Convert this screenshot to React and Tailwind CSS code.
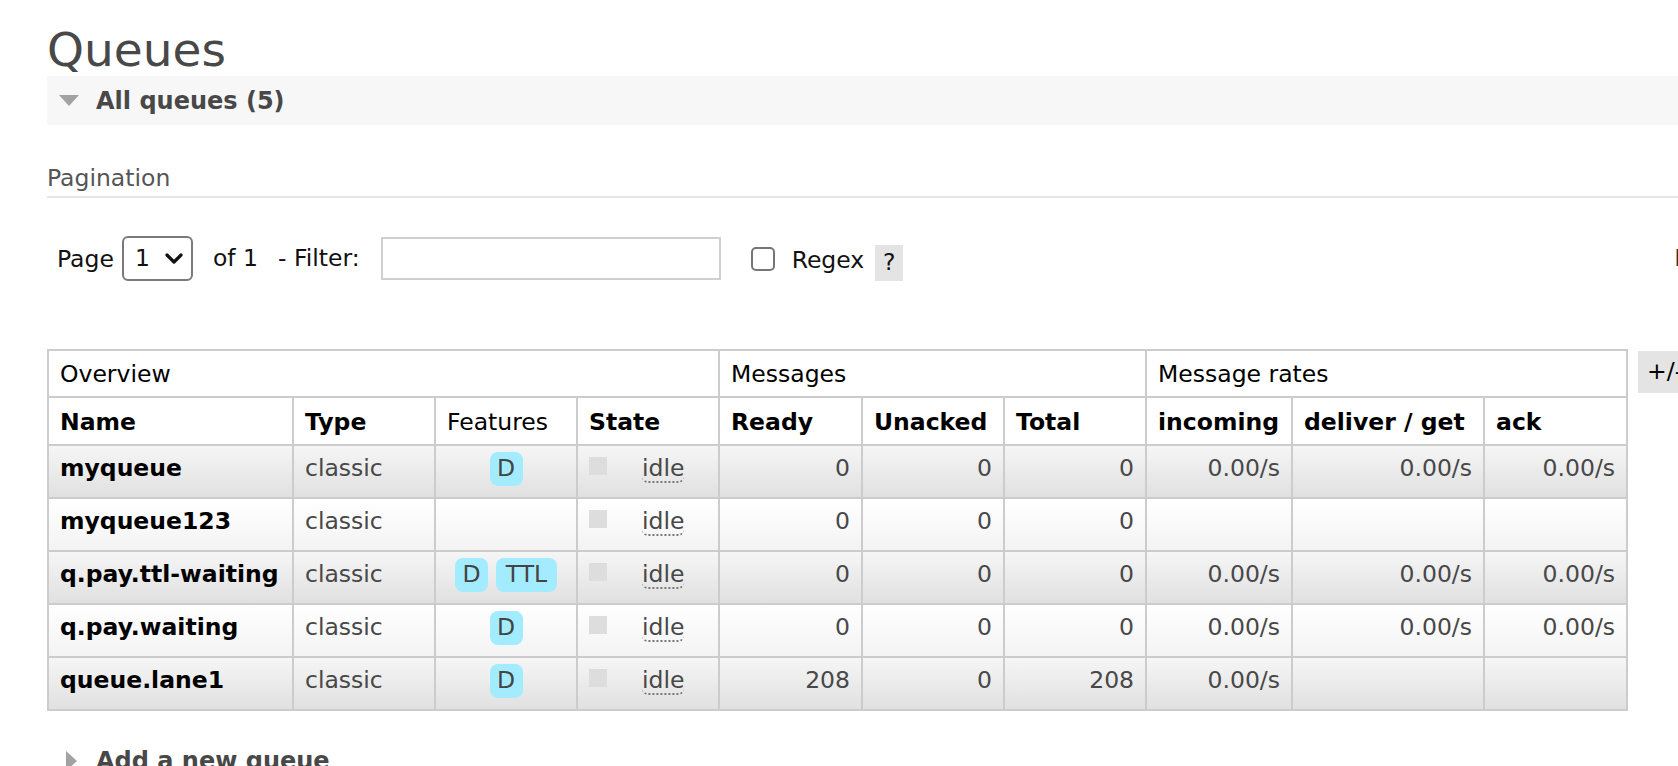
import React from "react";

const rows = [
  { name: "myqueue", feats: ["D"], ready: "0", unacked: "0", total: "0", inc: "0.00/s", del: "0.00/s", ack: "0.00/s" },
  { name: "myqueue123", feats: [], ready: "0", unacked: "0", total: "0", inc: "", del: "", ack: "" },
  { name: "q.pay.ttl-waiting", feats: ["D", "TTL"], ready: "0", unacked: "0", total: "0", inc: "0.00/s", del: "0.00/s", ack: "0.00/s" },
  { name: "q.pay.waiting", feats: ["D"], ready: "0", unacked: "0", total: "0", inc: "0.00/s", del: "0.00/s", ack: "0.00/s" },
  { name: "queue.lane1", feats: ["D"], ready: "208", unacked: "0", total: "208", inc: "0.00/s", del: "", ack: "" },
];

function Badge({ label }) {
  return (
    <span
      className={
        "inline-flex h-[34px] items-center justify-center rounded-[8px] bg-[#a3ecff] text-[#444] " +
        (label === "TTL" ? "w-[61px]" : "w-[33px]")
      }
    >
      {label}
    </span>
  );
}

export default function App() {
  const th = "border-2 border-[#cccccc] px-[11px] align-middle text-left";
  const td = "border-2 border-[#cccccc] px-[11px] pb-[6px] align-middle";
  const num = td + " text-right text-[#484848]";
  return (
    <div className="w-[1678px] h-[766px] overflow-hidden bg-white font-['DejaVu_Sans',Verdana,sans-serif] text-[23.5px] text-black">
      <div className="pl-[47px] w-[1760px]">
        <h1 className="mt-[24px] text-[47px] leading-[52px] font-normal text-[#484848]">Queues</h1>
        <div className="h-[49px] bg-[#f7f7f7] flex items-center">
          <svg className="ml-[12px] shrink-0" width="20" height="11" viewBox="0 0 20 11">
            <polygon points="0,0 20,0 10,11" fill="#a2a2a2" />
          </svg>
          <span className="ml-[17px] text-[24px] font-bold text-[#484848]">All queues (5)</span>
        </div>

        <div className="mt-[39px] h-[28px] leading-[28px] text-[#555]">Pagination</div>
        <div className="mt-[4px] h-[2px] bg-[#e6e6e6]"></div>

        <div className="mt-[38px] h-[45px] flex items-center pl-[10px] text-[#111] whitespace-nowrap">
          <span className="shrink-0 mt-[3px]">Page</span>
          <div className="shrink-0 ml-[8px] h-[45px] w-[71px] rounded-[6px] border-2 border-[#7a7a7a] flex items-center pl-[11px]">
            <span>1</span>
            <svg className="ml-[15px]" width="18" height="12" viewBox="0 0 18 12">
              <polyline points="2,2 9,9 16,2" fill="none" stroke="#111" strokeWidth="3.2" strokeLinecap="round" strokeLinejoin="round" />
            </svg>
          </div>
          <span className="shrink-0 ml-[20px]">of 1</span>
          <span className="shrink-0 ml-[20px]">- Filter:</span>
          <div className="shrink-0 ml-[21px] h-[43px] w-[340px] border-2 border-[#cfcfcf] bg-white"></div>
          <div className="shrink-0 ml-[30px] h-[24px] w-[24px] rounded-[5px] border-2 border-[#767676] bg-white"></div>
          <span className="shrink-0 ml-[17px] mt-[5px]">Regex</span>
          <span className="shrink-0 ml-[11px] self-end h-[36px] w-[28px] bg-[#e4e4e4] flex items-center justify-center">?</span>
          <span className="shrink-0 ml-[771px] text-[#333]">Displaying 5 items</span>
        </div>

        <div className="mt-[68px] flex items-start">
          <table className="shrink-0 table-fixed border-collapse w-[1579px] border-2 border-[#cccccc]">
            <colgroup>
              <col className="w-[245px]" />
              <col className="w-[142px]" />
              <col className="w-[142px]" />
              <col className="w-[142px]" />
              <col className="w-[143px]" />
              <col className="w-[142px]" />
              <col className="w-[142px]" />
              <col className="w-[146px]" />
              <col className="w-[192px]" />
              <col className="w-[143px]" />
            </colgroup>
            <thead>
              <tr className="h-[47px] bg-white">
                <th colSpan={4} className={th + " pt-[2px] font-normal"}>Overview</th>
                <th colSpan={3} className={th + " pt-[2px] font-normal"}>Messages</th>
                <th colSpan={3} className={th + " pt-[2px] font-normal"}>Message rates</th>
              </tr>
              <tr className="h-[48px] bg-white">
                <th className={th + " pt-[4px] font-bold"}>Name</th>
                <th className={th + " pt-[4px] font-bold"}>Type</th>
                <th className={th + " pt-[4px] font-normal"}>Features</th>
                <th className={th + " pt-[4px] font-bold"}>State</th>
                <th className={th + " pt-[4px] font-bold"}>Ready</th>
                <th className={th + " pt-[4px] font-bold"}>Unacked</th>
                <th className={th + " pt-[4px] font-bold"}>Total</th>
                <th className={th + " pt-[4px] font-bold"}>incoming</th>
                <th className={th + " pt-[4px] font-bold whitespace-nowrap"}>deliver / get</th>
                <th className={th + " pt-[4px] font-bold"}>ack</th>
              </tr>
            </thead>
            <tbody>
              {rows.map((r, i) => (
                <tr
                  key={r.name}
                  className={
                    i % 2 === 0
                      ? "h-[53px] bg-linear-to-b from-[#f6f6f6] to-[#e0e0e0]"
                      : "h-[53px] bg-linear-to-b from-[#ffffff] to-[#f3f3f3]"
                  }
                >
                  <td className={td + " font-bold whitespace-nowrap"}>{r.name}</td>
                  <td className={td + " text-[#484848]"}>classic</td>
                  <td className={td + " text-center"}>
                    <div className="flex items-center justify-center gap-[8px]">
                      {r.feats.map((f) => (
                        <Badge key={f} label={f} />
                      ))}
                    </div>
                  </td>
                  <td className={td}>
                    <div className="flex items-center">
                      <span className="shrink-0 h-[18px] w-[18px] bg-[#dddddd] -mt-[6px]"></span>
                      <span className="ml-[35px] text-[#484848] leading-[26px] border-b-2 border-dotted border-[#777] rounded-b-[6px]">idle</span>
                    </div>
                  </td>
                  <td className={num}>{r.ready}</td>
                  <td className={num}>{r.unacked}</td>
                  <td className={num}>{r.total}</td>
                  <td className={num}>{r.inc}</td>
                  <td className={num}>{r.del}</td>
                  <td className={num}>{r.ack}</td>
                </tr>
              ))}
            </tbody>
          </table>
          <div className="shrink-0 ml-[10px] mt-[2px] h-[42px] w-[60px] bg-[#e4e4e4] flex items-center pl-[9px] whitespace-nowrap">+/-</div>
        </div>

        <div className="mt-[36px] flex items-center h-[28px]">
          <svg className="ml-[19px] shrink-0" width="11" height="20" viewBox="0 0 11 20">
            <polygon points="0,0 11,10 0,20" fill="#a2a2a2" />
          </svg>
          <span className="ml-[19px] text-[24px] font-bold text-[#484848]">Add a new queue</span>
        </div>
      </div>
    </div>
  );
}
